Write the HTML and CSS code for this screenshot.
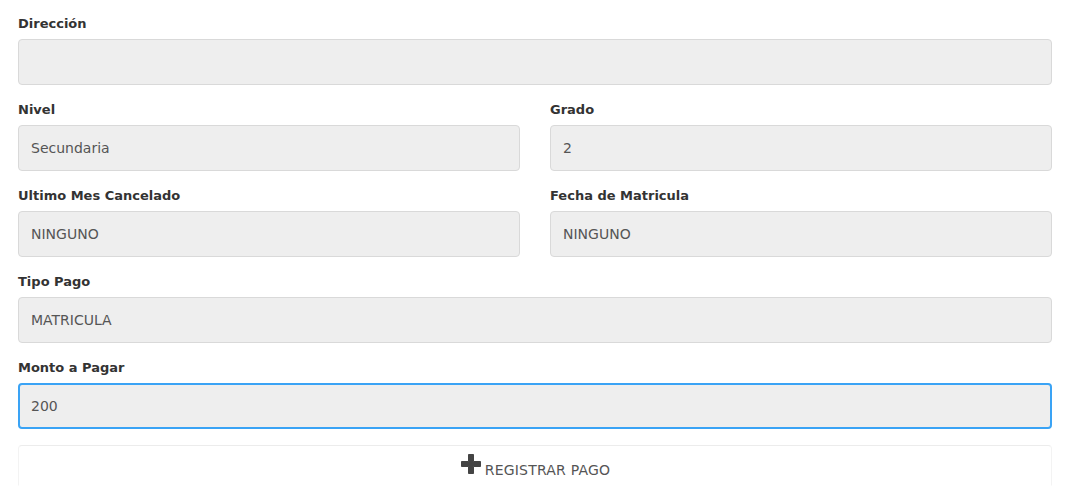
FILE: index.html
```html
<!DOCTYPE html>
<html lang="es">
<head>
<meta charset="utf-8">
<link rel="stylesheet" href="styles.css">
</head>
<body>
<form class="form">
  <div class="field">
    <label class="label">Dirección</label>
    <div class="input"></div>
  </div>
  <div class="row">
    <div class="field">
      <label class="label">Nivel</label>
      <div class="input">Secundaria</div>
    </div>
    <div class="field">
      <label class="label">Grado</label>
      <div class="input">2</div>
    </div>
  </div>
  <div class="row">
    <div class="field">
      <label class="label">Ultimo Mes Cancelado</label>
      <div class="input">NINGUNO</div>
    </div>
    <div class="field">
      <label class="label">Fecha de Matricula</label>
      <div class="input">NINGUNO</div>
    </div>
  </div>
  <div class="field">
    <label class="label">Tipo Pago</label>
    <div class="input">MATRICULA</div>
  </div>
  <div class="field">
    <label class="label">Monto a Pagar</label>
    <div class="input input-focus">200</div>
  </div>
  <div class="button">
    <svg class="plus" viewBox="0 0 22 22" width="22" height="22" aria-hidden="true">
      <path d="M8.5 1.5 h5 v7 h7 v5 h-7 v7 h-5 v-7 h-7 v-5 h7 z" fill="#444" stroke="#444" stroke-width="1" stroke-linejoin="round"/>
    </svg>
    <span class="button-text">REGISTRAR PAGO</span>
  </div>
</form>
</body>
</html>
```

FILE: styles.css
```css
html, body {
  margin: 0;
  padding: 0;
  background: #fff;
}
body {
  font-family: "DejaVu Sans", "Open Sans", sans-serif;
  color: #333;
  width: 1076px;
  height: 502px;
  overflow: hidden;
}
.form {
  padding: 14px 24px 0 18px;
  display: flex;
  flex-direction: column;
}
.row {
  display: grid;
  grid-template-columns: 502px 502px;
  column-gap: 30px;
}
.field {
  display: flex;
  flex-direction: column;
  margin-bottom: 15px;
}
.label {
  font-weight: bold;
  font-size: 13px;
  line-height: 20px;
  height: 20px;
  margin-bottom: 5px;
  color: #333;
}
.input {
  box-sizing: border-box;
  height: 46px;
  border: 1px solid #d9d9d9;
  border-radius: 4px;
  background: #eeeeee;
  padding: 0 12px;
  font-size: 14px;
  color: #555;
  display: flex;
  align-items: center;
}
.input-focus {
  border: 2px solid #3aa3f5;
  padding-left: 11px;
}
.button {
  box-sizing: border-box;
  margin-top: 1px;
  height: 41px;
  border: 1px solid #ececec;
  border-bottom-color: transparent;
  border-left-color: #f3f3f3;
  border-right-color: #f3f3f3;
  border-radius: 4px 4px 0 0;
  display: flex;
  justify-content: center;
  align-items: flex-start;
  padding-top: 7px;
  gap: 3px;
  color: #555;
}
.plus {
  display: block;
}
.button-text {
  font-size: 14px;
  line-height: 20px;
  margin-top: 7px;
  color: #555;
  letter-spacing: 0.2px;
}
```
